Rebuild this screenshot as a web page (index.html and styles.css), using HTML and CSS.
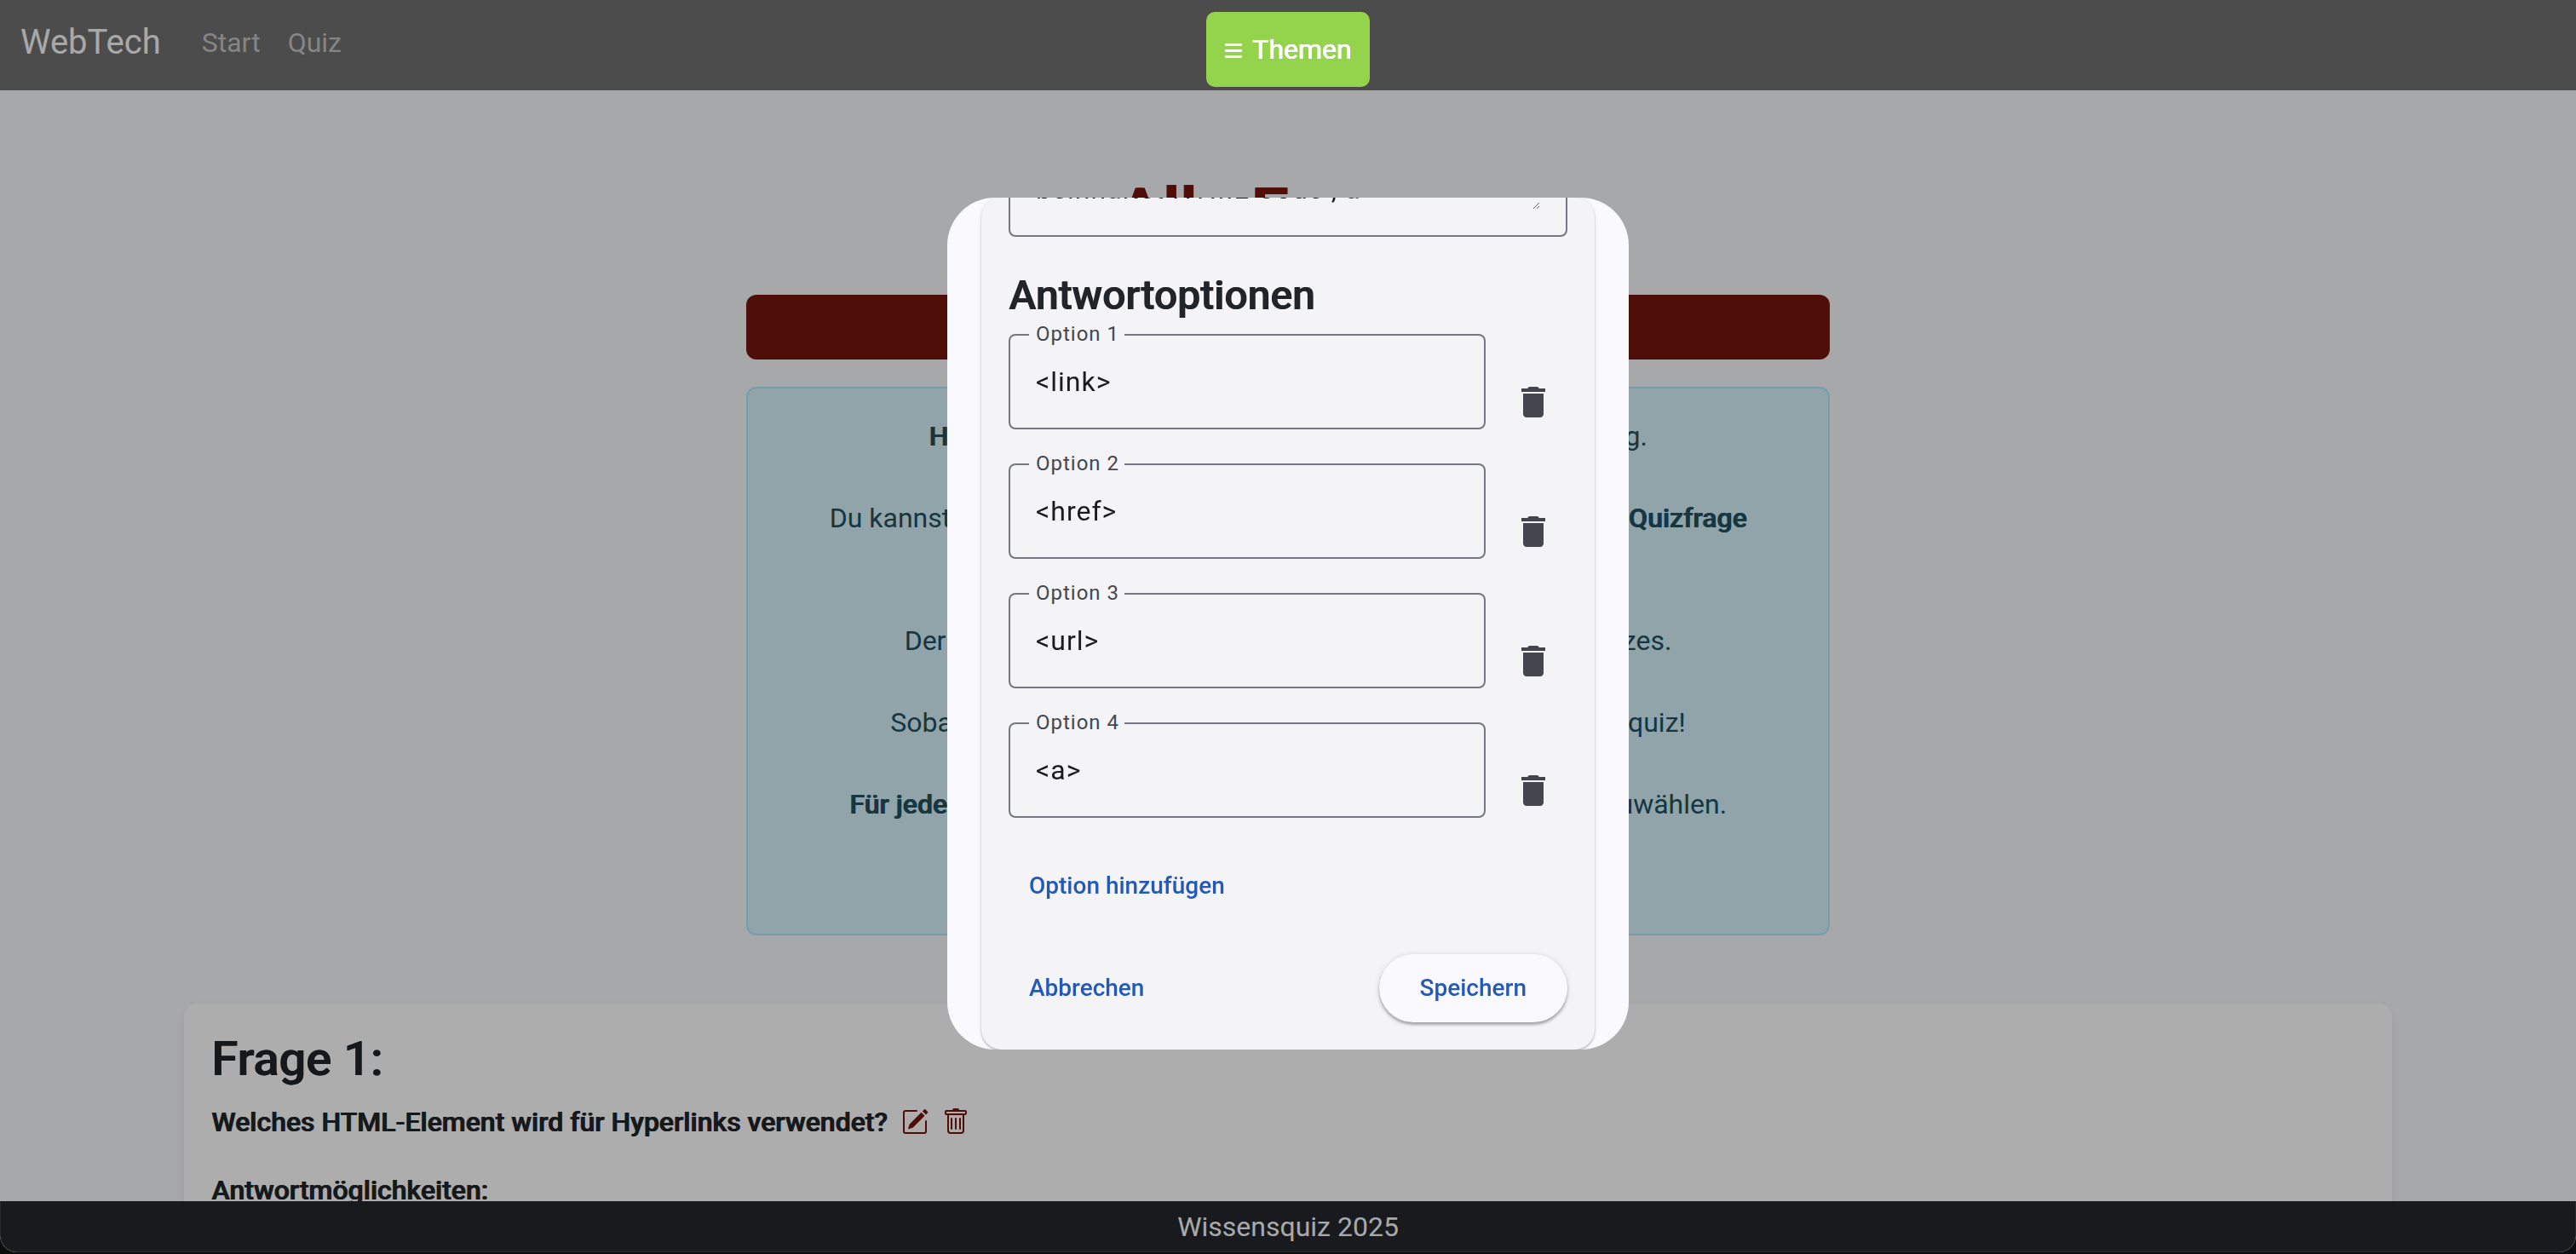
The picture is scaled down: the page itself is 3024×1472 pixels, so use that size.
FILE: index.html
```html
<!DOCTYPE html>
<html lang="de">
<head>
<meta charset="utf-8">
<meta name="viewport" content="width=device-width, initial-scale=1">
<title>WebTech – Wissensquiz</title>
<link rel="stylesheet" href="styles.css">
</head>
<body>
<svg class="sprite" aria-hidden="true">
  <symbol id="delete" viewBox="0 0 24 24"><path d="M6 19c0 1.100.9 2 2 2h8c1.100 0 2-.9 2-2V7H6v12zM19 4h-3.500l-1-1h-5l-1 1H5v2h14V4z"/></symbol>
  <symbol id="pencil" viewBox="0 0 16 16"><path d="M15.502 1.940a.5.5 0 0 1 0 .706L14.459 3.690l-2-2L13.502.646a.5.5 0 0 1 .707 0l1.293 1.293zm-1.750 2.456-2-2L4.939 9.210a.5.5 0 0 0-.121.196l-.805 2.414a.25.25 0 0 0 .316.316l2.414-.805a.5.5 0 0 0 .196-.12l6.813-6.814z"/><path fill-rule="evenodd" d="M1 13.500A1.500 1.500 0 0 0 2.500 15h11a1.500 1.500 0 0 0 1.500-1.500v-6a.5.5 0 0 0-1 0v6a.5.5 0 0 1-.5.5h-11a.5.5 0 0 1-.5-.5v-11a.5.5 0 0 1 .5-.5H9a.5.5 0 0 0 0-1H2.500A1.500 1.500 0 0 0 1 2.500z"/></symbol>
  <symbol id="trash" viewBox="0 0 16 16"><path d="M5.500 5.500A.5.5 0 0 1 6 6v6a.5.5 0 0 1-1 0V6a.5.5 0 0 1 .5-.5m2.500 0a.5.5 0 0 1 .5.5v6a.5.5 0 0 1-1 0V6a.5.5 0 0 1 .5-.5m3 .5a.5.5 0 0 0-1 0v6a.5.5 0 0 0 1 0z"/><path d="M14.500 3a1 1 0 0 1-1 1H13v9a2 2 0 0 1-2 2H5a2 2 0 0 1-2-2V4h-.5a1 1 0 0 1-1-1V2a1 1 0 0 1 1-1H6a1 1 0 0 1 1-1h2a1 1 0 0 1 1 1h3.500a1 1 0 0 1 1 1zM4.118 4 4 4.059V13a1 1 0 0 0 1 1h6a1 1 0 0 0 1-1V4.059L11.882 4zM2.500 3h11V2h-11z"/></symbol>
</svg>

<div class="page">
  <header class="navbar">
    <a class="brand" href="#">WebTech</a>
    <nav class="nav">
      <a href="#">Start</a>
      <a href="#">Quiz</a>
    </nav>
  </header>

  <main class="content">
    <h1 class="page-title">Alle Fragen</h1>
    <div class="intro">
      <button class="add-question" type="button">Neue Frage hinzufügen</button>
      <div class="info">
        <p><strong>Hier</strong> findest du eine Liste mit allen Fragen deiner Vorlesung.</p>
        <p>Du kannst die Fragen löschen, bearbeiten oder jederzeit eine <strong>neue Quizfrage hinzufügen.</strong></p>
        <p>Der Fragenkatalog bildet immer die Grundlage unseres Quizzes.</p>
        <p>Sobald du damit fertig bist, starte einfach das große Wissensquiz!</p>
        <p><strong>Für jede Frage</strong> ist am Ende genau die eine richtige Antwort auszuwählen.</p>
      </div>
    </div>
    <section class="question">
      <h3>Frage 1:</h3>
      <div class="question-line">
        <strong>Welches HTML-Element wird für Hyperlinks verwendet?</strong>
        <button class="icon-link" type="button" aria-label="Frage bearbeiten"><svg><use href="#pencil"/></svg></button>
        <button class="icon-link" type="button" aria-label="Frage löschen"><svg><use href="#trash"/></svg></button>
      </div>
      <strong>Antwortmöglichkeiten:</strong>
    </section>
  </main>

  <footer class="footer">Wissensquiz 2025</footer>
</div>

<div class="backdrop">
  <div class="dialog" role="dialog" aria-modal="true" aria-label="Frage bearbeiten">
    <form class="form-card">
      <div class="area-field">
        <textarea rows="2" aria-label="Erklärung">Der Link
beinhaltet HTML Code , a</textarea>
      </div>
      <h2>Antwortoptionen</h2>
      <div class="option">
        <div class="field"><label for="o1">Option 1</label><input id="o1" type="text" value="&lt;link&gt;"></div>
        <button class="remove" type="button" aria-label="Option 1 löschen"><svg><use href="#delete"/></svg></button>
      </div>
      <div class="option">
        <div class="field"><label for="o2">Option 2</label><input id="o2" type="text" value="&lt;href&gt;"></div>
        <button class="remove" type="button" aria-label="Option 2 löschen"><svg><use href="#delete"/></svg></button>
      </div>
      <div class="option">
        <div class="field"><label for="o3">Option 3</label><input id="o3" type="text" value="&lt;url&gt;"></div>
        <button class="remove" type="button" aria-label="Option 3 löschen"><svg><use href="#delete"/></svg></button>
      </div>
      <div class="option">
        <div class="field"><label for="o4">Option 4</label><input id="o4" type="text" value="&lt;a&gt;"></div>
        <button class="remove" type="button" aria-label="Option 4 löschen"><svg><use href="#delete"/></svg></button>
      </div>
      <button class="btn btn-add" type="button">Option hinzufügen</button>
      <div class="actions">
        <button class="btn" type="button">Abbrechen</button>
        <button class="btn btn-raised" type="submit">Speichern</button>
      </div>
    </form>
  </div>
</div>

<button class="topics" type="button"><svg viewBox="0 0 20 18"><path d="M0 0h20v3H0zM0 7h20v3H0zM0 14h20v3H0z"/></svg>Themen</button>
</body>
</html>
```
FILE: styles.css
```css
* {
  box-sizing: border-box;
}

body {
  margin: 0;
  background: #111;
  color: #212529;
  font: 32px/48px Roboto, "Liberation Sans", sans-serif;
}

h1, h2, h3, p {
  margin: 0;
}

h1, h2, h3, strong {
  font-weight: 500;
  text-shadow: 1px 0 currentColor;
}

button, input, textarea {
  font: inherit;
}

button {
  border: 0;
  background: none;
  cursor: pointer;
}

svg {
  display: block;
  fill: currentColor;
}

.sprite {
  position: absolute;
  width: 0;
  height: 0;
}

/* Page */
.page {
  display: flex;
  flex-direction: column;
  height: calc(100vh - 2px);
  background: #f7f8fa;
  border-radius: 0 0 20px 20px;
  overflow: hidden;
}

.navbar {
  display: flex;
  flex: none;
  align-items: center;
  gap: 48px;
  height: 106px;
  padding: 0 24px 6px;
  background: #707070;
}

.brand {
  color: #f8f8f8;
  font-size: 40px;
  text-decoration: none;
}

.nav {
  display: flex;
  gap: 32px;
}

.nav a {
  color: #c4c4c4;
  text-decoration: none;
}

.content {
  flex: 1;
  min-height: 0;
  padding: 96px 216px 0;
  overflow: hidden;
}

.page-title {
  margin-bottom: 48px;
  color: #76150d;
  font-size: 80px;
  line-height: 96px;
  text-align: center;
  text-shadow: 2px 0 currentColor;
}

.intro {
  max-width: 1272px;
  margin: 0 auto 80px;
}

.add-question {
  display: block;
  width: 100%;
  height: 76px;
  margin-bottom: 32px;
  border-radius: 12px;
  background: #76150d;
  color: #fff;
}

.info {
  padding: 32px 64px 80px;
  border: 2px solid #abebfb;
  border-radius: 12px;
  background: #d6f2fa;
  color: #23505e;
  text-align: center;
}

.info p + p {
  margin-top: 48px;
}

.info p:last-child {
  margin-bottom: 48px;
}

.question {
  padding: 32px;
  border-radius: 16px;
  background: #fff;
  box-shadow: 0 4px 12px rgba(0, 0, 0, .06);
}

.question h3 {
  margin-bottom: 16px;
  font-size: 56px;
  line-height: 67px;
}

.question-line {
  display: flex;
  align-items: center;
  gap: 16px;
  margin-bottom: 32px;
}

.icon-link {
  padding: 0;
  color: #76150d;
}

.icon-link svg {
  width: 32px;
  height: 32px;
}

.footer {
  flex: none;
  height: 60px;
  padding-top: 6px;
  border: solid #3c3d40;
  border-width: 0 1px 1px;
  border-radius: 0 0 20px 20px;
  background: #25272b;
  color: #f8f9fa;
  text-align: center;
}

/* Topics button stays above the backdrop */
.topics {
  position: fixed;
  top: 14px;
  left: 50%;
  display: flex;
  align-items: center;
  justify-content: center;
  gap: 12px;
  width: 192px;
  height: 88px;
  margin-left: -96px;
  padding: 0;
  border-radius: 10px;
  background: #94d34c;
  color: #fff;
  text-shadow: 1px 0 currentColor;
}

.topics svg {
  width: 20px;
  height: 18px;
  margin-top: 4px;
}

/* Dialog */
.backdrop {
  position: fixed;
  inset: 0;
  display: grid;
  place-items: center;
  padding-bottom: 8px;
  background: rgba(0, 0, 0, .32);
}

.dialog {
  width: 800px;
  max-width: 80vw;
  height: 68vh;
  padding: 0 40px;
  border-radius: 56px;
  background: #faf9fe;
  overflow: hidden;
}

.form-card {
  display: flex;
  flex-direction: column;
  justify-content: flex-end;
  height: 100%;
  padding: 32px;
  border-radius: 24px;
  background: #f4f3f6;
  box-shadow: 0 2px 2px rgba(0, 0, 0, .2), 0 0 4px rgba(0, 0, 0, .12);
  overflow: hidden;
}

.area-field {
  flex: none;
  margin-bottom: 40px;
  padding: 32px 30px 30px;
  border: 2px solid #74777f;
  border-radius: 8px;
}

.area-field textarea {
  display: block;
  width: 100%;
  padding: 0;
  border: 0;
  outline: 0;
  background: none;
  color: #1a1b1f;
  letter-spacing: 1px;
  overflow: hidden;
  resize: vertical;
}

.form-card h2 {
  margin-bottom: 16px;
  font-size: 48px;
  line-height: 58px;
}

.option {
  display: flex;
  flex: none;
  align-items: flex-end;
  gap: 16px;
  margin-bottom: 40px;
}

.field {
  position: relative;
  flex: 1;
}

.field label {
  position: absolute;
  top: -16px;
  left: 24px;
  width: 112px;
  padding-left: 8px;
  background: #f4f3f6;
  color: #44474e;
  font-size: 24px;
  line-height: 32px;
  letter-spacing: 1px;
  white-space: nowrap;
}

.field input {
  display: block;
  width: 100%;
  height: 112px;
  padding: 0 30px;
  border: 2px solid #74777f;
  border-radius: 8px;
  outline: 0;
  background: none;
  color: #1a1b1f;
  letter-spacing: 1px;
}

.remove {
  display: grid;
  place-items: center;
  width: 80px;
  height: 64px;
  padding: 0;
  color: #44464d;
}

.remove svg {
  width: 48px;
  height: 48px;
}

.btn {
  flex: none;
  height: 80px;
  padding: 0 24px;
  border-radius: 40px;
  color: #2459b5;
  font-size: 28px;
  font-weight: 500;
}

.btn-add {
  align-self: flex-start;
  margin-bottom: 40px;
}

.actions {
  display: flex;
  flex: none;
  justify-content: space-between;
}

.btn-raised {
  padding: 0 48px;
  background: #faf9fe;
  box-shadow: 0 3px 3px rgba(0, 0, 0, .25), 0 1px 6px rgba(0, 0, 0, .15);
}
```
